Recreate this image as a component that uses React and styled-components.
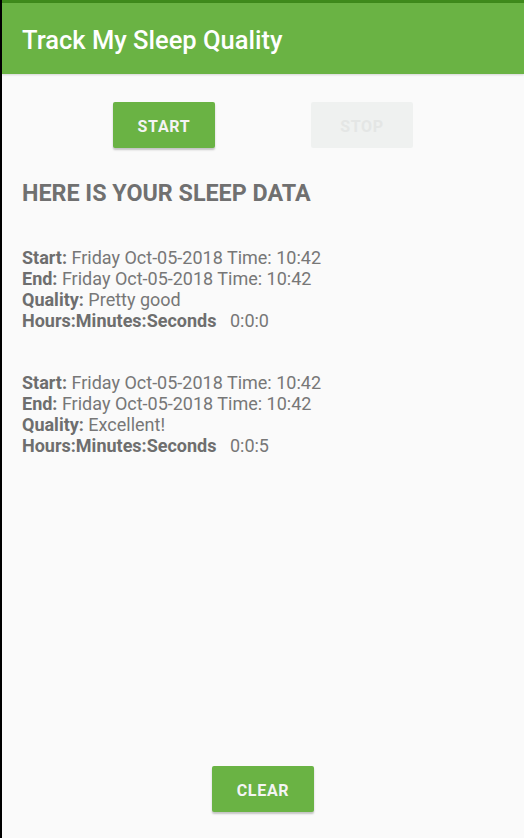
import styled, { createGlobalStyle } from "styled-components";

const GlobalStyle = createGlobalStyle`
  html, body {
    margin: 0;
    padding: 0;
    background: #000;
  }
  body {
    font-family: Roboto, "Noto Sans", sans-serif;
  }
`;

const Screen = styled.div`
  margin-left: 2px;
  width: 522px;
  height: 838px;
  background: #fafafa;
  display: flex;
  flex-direction: column;
`;

const StatusBar = styled.div`
  height: 3px;
  background: #3e8a1b;
`;

const AppBar = styled.header`
  height: 71px;
  background: #6ab344;
  display: flex;
  align-items: center;
  padding-left: 20px;
  box-shadow: 0 1px 2px rgba(0, 0, 0, 0.15);
`;

const Title = styled.h1`
  margin: 0;
  color: #fff;
  font-size: 25.5px;
  font-weight: 500;
  padding-top: 2px;
`;

const ButtonRow = styled.div`
  display: flex;
  justify-content: center;
  gap: 96px;
  margin-top: 28px;
`;

const Button = styled.button`
  width: 102px;
  height: 46px;
  border: none;
  border-radius: 2px;
  font-family: Roboto, sans-serif;
  font-size: 16px;
  font-weight: 700;
  letter-spacing: 0.7px;
  padding: 3px 0 0;
  background: ${(p) => (p.disabled ? "#eff1f0" : "#6ab344")};
  color: ${(p) => (p.disabled ? "#e4e6e5" : "#f4f4f4")};
  box-shadow: ${(p) =>
    p.disabled ? "none" : "0 2px 2px rgba(0, 0, 0, 0.22)"};
`;

const Content = styled.main`
  flex: 1;
  padding: 0 20px;
`;

const Heading = styled.h2`
  margin: 31px 0 0;
  font-size: 23.3px;
  font-weight: 700;
  color: #707070;
  line-height: 28px;
`;

const Night = styled.div`
  margin-top: ${(p) => (p.first ? "40px" : "41px")};
  color: #777;
  font-size: 18px;
  line-height: 21px;
`;

const Line = styled.div`
  white-space: pre;
`;

const Label = styled.span`
  font-weight: 700;
  color: #6e6e6e;
`;

const Footer = styled.div`
  display: flex;
  justify-content: center;
  padding-bottom: 26px;
`;

const nights = [
  { quality: "Pretty good", duration: "0:0:0" },
  { quality: "Excellent!", duration: "0:0:5" },
];

export default function App() {
  return (
    <>
      <GlobalStyle />
      <Screen>
        <StatusBar />
        <AppBar>
          <Title>Track My Sleep Quality</Title>
        </AppBar>
        <ButtonRow>
          <Button>START</Button>
          <Button disabled>STOP</Button>
        </ButtonRow>
        <Content>
          <Heading>HERE IS YOUR SLEEP DATA</Heading>
          {nights.map((n, i) => (
            <Night key={i} first={i === 0}>
              <Line>
                <Label>Start:</Label> Friday Oct-05-2018 Time: 10:42
              </Line>
              <Line>
                <Label>End:</Label> Friday Oct-05-2018 Time: 10:42
              </Line>
              <Line>
                <Label>Quality:</Label> {n.quality}
              </Line>
              <Line>
                <Label>Hours:Minutes:Seconds</Label>   {n.duration}
              </Line>
            </Night>
          ))}
        </Content>
        <Footer>
          <Button>CLEAR</Button>
        </Footer>
      </Screen>
    </>
  );
}
